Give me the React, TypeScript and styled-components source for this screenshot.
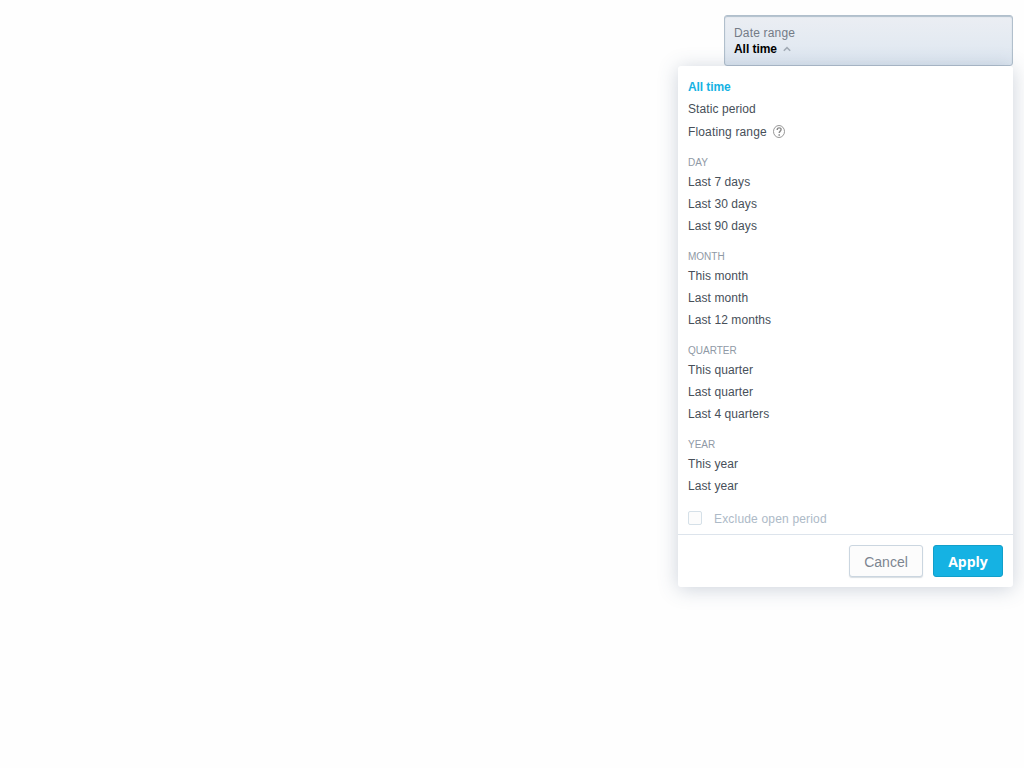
import React from "react";
import styled, { createGlobalStyle, css } from "styled-components";

const GlobalStyle = createGlobalStyle`
  * { box-sizing: border-box; }
  body {
    margin: 0;
    background: #fefefe;
    color: #474f59;
    font: 12px/16px "Liberation Sans", Arial, sans-serif;
  }
  button { font-family: inherit; }
`;

const Page = styled.main`
  display: flex;
  flex-direction: column;
  align-items: flex-end;
  min-height: 100vh;
  padding: 15px 11px 0 0;
`;

const Trigger = styled.button`
  width: 289px;
  height: 51px;
  padding: 9px 9px 8px;
  border: 1px solid #b1bfcc;
  border-radius: 3px;
  background: linear-gradient(#ebeef3, #dee7f1);
  box-shadow: inset 0 1px 1px #b1bfcc;
  font-size: 12px;
  line-height: 16px;
  text-align: left;
`;

const TriggerLabel = styled.div`
  color: #747b86;
  letter-spacing: 0.18px;
`;

const TriggerValue = styled.div`
  display: flex;
  align-items: center;
  gap: 6px;
  color: #000;
  font-weight: bold;
  letter-spacing: -0.05px;
`;

const Panel = styled.section`
  width: 335px;
  border-radius: 3px;
  background: #fff;
  box-shadow: 0 2px 20px rgba(62, 84, 120, 0.26);
`;

const Options = styled.div`
  padding: 10px 10px 0;
`;

const Group = styled.ul`
  margin: 0;
  padding: 0;
  list-style: none;
`;

const GroupTitle = styled.h3`
  height: 28px;
  margin: 0;
  padding-top: 12px;
  color: #8f99a5;
  font-size: 10px;
  font-weight: normal;
  line-height: 16px;
  text-transform: uppercase;
`;

const Option = styled.li<{ $selected?: boolean; $hint?: boolean }>`
  display: flex;
  align-items: center;
  height: ${(p) => (p.$hint ? 23 : 22)}px;
  gap: 6px;
  letter-spacing: ${(p) => (p.$hint ? 0.15 : 0.08)}px;
  ${(p) =>
    p.$selected &&
    css`
      color: #15b2e3;
      font-weight: bold;
      letter-spacing: -0.08px;
    `}
`;

const Exclude = styled.div`
  display: flex;
  align-items: center;
  gap: 12px;
  height: 37px;
  padding-top: 6px;
  color: #adbac7;
  letter-spacing: 0.18px;
`;

const Checkbox = styled.span`
  width: 14px;
  height: 14px;
  margin-top: -2px;
  border: 1px solid #d5e0e8;
  border-radius: 2px;
  background: #fcfcfc;
`;

const Footer = styled.footer`
  display: flex;
  justify-content: flex-end;
  gap: 10px;
  padding: 10px;
  border-top: 1px solid #dde4ec;
`;

const Button = styled.button<{ $primary?: boolean }>`
  width: ${(p) => (p.$primary ? 70 : 74)}px;
  height: 32px;
  padding: 2px 0 0;
  border: 1px solid ${(p) => (p.$primary ? "#129fca" : "#cbd6e0")};
  border-radius: 3px;
  background: ${(p) => (p.$primary ? "#15b2e3" : "#fcfcfc")};
  box-shadow: ${(p) => (p.$primary ? "none" : "0 1px 1px rgba(100, 120, 140, 0.25)")};
  color: ${(p) => (p.$primary ? "#fff" : "#7c8590")};
  font-size: 14px;
  ${(p) =>
    p.$primary &&
    css`
      padding: 0;
      font-family: "Open Sans", sans-serif;
      font-weight: bold;
    `}
`;

const groups = [
  { title: "Day", items: ["Last 7 days", "Last 30 days", "Last 90 days"] },
  { title: "Month", items: ["This month", "Last month", "Last 12 months"] },
  { title: "Quarter", items: ["This quarter", "Last quarter", "Last 4 quarters"] },
  { title: "Year", items: ["This year", "Last year"] },
];

const Chevron = () => (
  <svg width="8" height="6" viewBox="0 0 8 6" fill="none" stroke="#a2abb5" strokeWidth="1.5">
    <path d="M.8 4.8 4 1.6l3.2 3.2" />
  </svg>
);

const HelpIcon = () => (
  <svg width="12" height="13" viewBox="0 0 12 13" fill="none" stroke="#8b8b8b">
    <ellipse cx="6" cy="6.5" rx="5.5" ry="6" strokeWidth="0.9" />
    <path d="M4.2 4.9c0-1.3.8-2 1.9-2 1.2 0 2 .7 2 1.7 0 1.5-1.9 1.6-1.9 3.4" strokeWidth="1.4" />
    <path d="M6.2 9.2v1.5" strokeWidth="1.5" />
  </svg>
);

export default function App() {
  return (
    <Page>
      <GlobalStyle />
      <Trigger>
        <TriggerLabel>Date range</TriggerLabel>
        <TriggerValue>
          All time
          <Chevron />
        </TriggerValue>
      </Trigger>
      <Panel>
        <Options>
          <Group>
            <Option $selected>All time</Option>
            <Option>Static period</Option>
            <Option $hint>
              Floating range
              <HelpIcon />
            </Option>
          </Group>
          {groups.map((group) => (
            <React.Fragment key={group.title}>
              <GroupTitle>{group.title}</GroupTitle>
              <Group>
                {group.items.map((item) => (
                  <Option key={item}>{item}</Option>
                ))}
              </Group>
            </React.Fragment>
          ))}
          <Exclude>
            <Checkbox />
            Exclude open period
          </Exclude>
        </Options>
        <Footer>
          <Button>Cancel</Button>
          <Button $primary>Apply</Button>
        </Footer>
      </Panel>
    </Page>
  );
}
